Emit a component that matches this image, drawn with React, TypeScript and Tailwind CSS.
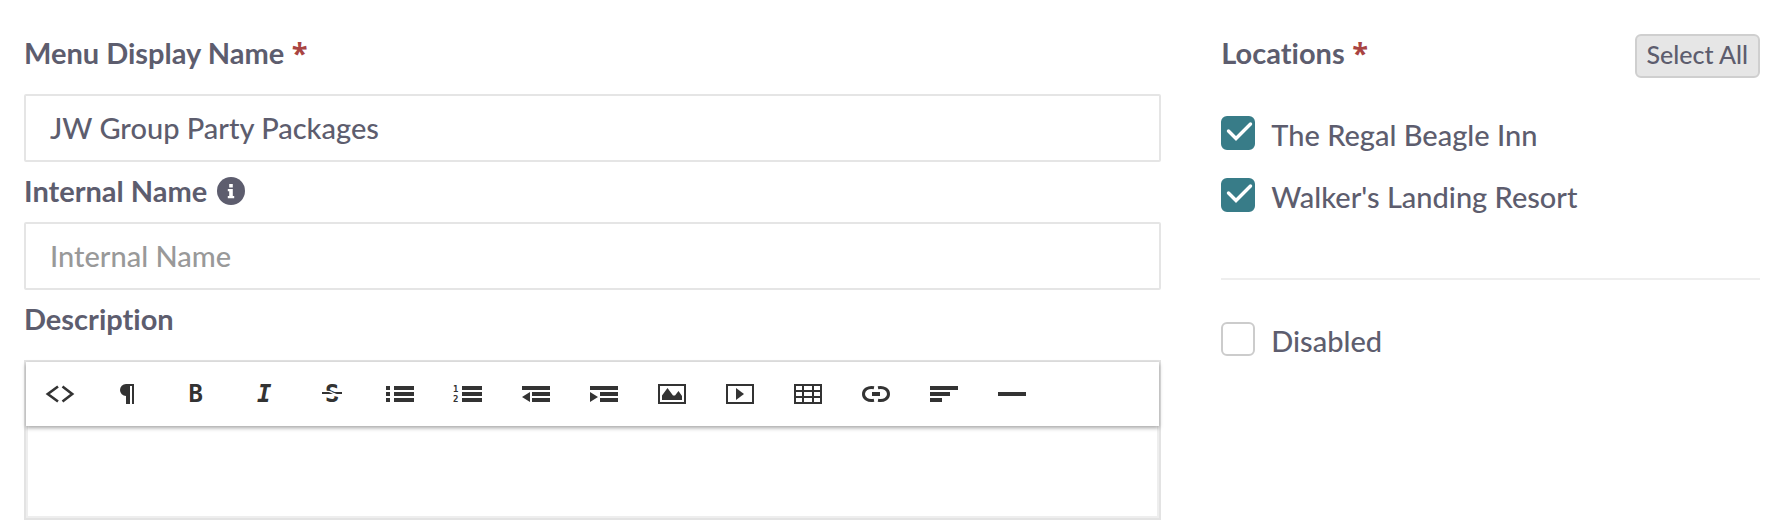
import { useState, type ReactNode } from "react";

const LOCATIONS = ["The Regal Beagle Inn", "Walker's Landing Resort"];

const TOOLS: { name: string; icon: ReactNode }[] = [
  {
    name: "HTML",
    icon: <path d="M12 2.500 1.800 10 12 17.500M16.500 2.500 26.200 10l-9.700 7.500" fill="none" stroke="currentColor" strokeWidth="2.6" />,
  },
  { name: "Formatting", icon: <path d="M12 0h8v20h-2V2h-2v18h-4v-8a6 6 0 0 1 0-12z" /> },
  { name: "Bold", icon: <text x="6.5" y="18" className="font-['DejaVu_Sans_Mono',monospace] text-[24px] font-bold">B</text> },
  {
    name: "Italic",
    icon: <text x="7" y="18" className="font-['DejaVu_Sans_Mono',monospace] text-[24px] font-bold italic">I</text>,
  },
  {
    name: "Strikethrough",
    icon: (
      <>
        <text x="7" y="18" className="font-['DejaVu_Sans_Mono',monospace] text-[24px] font-bold">S</text>
        <path d="M5 6.500 12 7l10 4v2.500l-6-1.500-11-1.500z" fill="#fff" />
        <path d="M4 8h7l4 2H4zM14 8h10v2h-5z" />
      </>
    ),
  },
  {
    name: "Bulleted list",
    icon: <path d="M0 2h4v4H0zM0 8h4v4H0zM0 14h4v4H0zM8 2h20v4H8zM8 8h20v4H8zM8 14h20v4H8z" />,
  },
  {
    name: "Numbered list",
    icon: (
      <>
        <text x="-1" y="8" className="font-['DejaVu_Sans_Mono',monospace] text-[9px] font-bold">1</text>
        <text x="-1" y="18" className="font-['DejaVu_Sans_Mono',monospace] text-[9px] font-bold">2</text>
        <path d="M8 2h20v4H8zM8 8h20v4H8zM8 14h20v4H8z" />
      </>
    ),
  },
  { name: "Outdent", icon: <path d="M0 2h28v4H0zM10 8h18v4H10zM10 14h18v4H10zM8 8v10L0 13z" /> },
  { name: "Indent", icon: <path d="M0 2h28v4H0zM10 8h18v4H10zM10 14h18v4H10zM0 8v10l8-5z" /> },
  {
    name: "Image",
    icon: (
      <>
        <path d="M1 1h26v18H1z" fill="none" stroke="currentColor" strokeWidth="2" />
        <path d="M4 16v-4.500L9.500 4 15 11.500h2L20.500 7l3.500 5v4z" />
      </>
    ),
  },
  {
    name: "Video",
    icon: (
      <>
        <path d="M1 1h26v18H1z" fill="none" stroke="currentColor" strokeWidth="2" />
        <path d="M10 4v12l8-6z" />
      </>
    ),
  },
  {
    name: "Table",
    icon: <path d="M1 1h26v18H1zM0 7h28M0 13h28M9 0v20M19 0v20" fill="none" stroke="currentColor" strokeWidth="2" />,
  },
  {
    name: "Link",
    icon: (
      <>
        <path
          d="M12 3.700C6 2.500 1.500 5.500 1.500 10S6 17.500 12 16.300M16 3.700c6-1.200 10.500 1.800 10.500 6.300S22 17.500 16 16.300"
          fill="none"
          stroke="currentColor"
          strokeWidth="3"
        />
        <path d="M10 8h8v4h-8z" />
      </>
    ),
  },
  { name: "Alignment", icon: <path d="M0 2h28v4H0zM0 8h20v4H0zM0 14h12v4H0z" /> },
  { name: "Horizontal rule", icon: <path d="M0 8h28v4H0z" /> },
];

function Required() {
  return <span className="font-['Open_Sans',sans-serif] text-[#a94442]"> *</span>;
}

function CheckRow({ label, checked, onChange }: { label: string; checked: boolean; onChange: () => void }) {
  return (
    <label className="flex h-[34px] items-start gap-4">
      <span className="grid shrink-0">
        <input
          type="checkbox"
          checked={checked}
          onChange={onChange}
          className="col-start-1 row-start-1 size-[34px] appearance-none rounded-md border-2 border-[#cccccc] bg-white checked:border-[#387c88] checked:bg-[#387c88]"
        />
        {checked && (
          <svg viewBox="0 0 34 34" className="pointer-events-none col-start-1 row-start-1 size-[34px]" aria-hidden="true">
            <path d="m7.500 15 7.500 7.500L29.500 8" fill="none" stroke="#fff" strokeWidth="3.4" strokeLinecap="round" />
          </svg>
        )}
      </span>
      <span className="pt-0.5 leading-[34px]">{label}</span>
    </label>
  );
}

export default function App() {
  const [displayName, setDisplayName] = useState("JW Group Party Packages");
  const [internalName, setInternalName] = useState("");
  const [selected, setSelected] = useState<string[]>(LOCATIONS);
  const [disabled, setDisabled] = useState(false);

  function toggle(name: string) {
    setSelected((prev) => (prev.includes(name) ? prev.filter((n) => n !== name) : [...prev, name]));
  }

  return (
    <form className="grid grid-cols-[19fr_9fr] gap-[60px] bg-white px-6 pt-[34px] font-['Lato','Open_Sans',sans-serif] text-[29px] leading-[38px] font-medium text-[#5d5d6e] [font-variant-ligatures:none]">
      <div className="flex flex-col">
        <label htmlFor="display-name" className="mb-[22px] font-bold">
          Menu Display Name
          <Required />
        </label>
        <input
          id="display-name"
          type="text"
          value={displayName}
          onChange={(e) => setDisplayName(e.target.value)}
          className="h-[68px] w-full rounded-xs border-2 border-[#e5e5e5] px-6 pb-0.5"
        />

        <div className="mt-2.5 mb-3 flex items-center gap-2.5">
          <label htmlFor="internal-name" className="font-bold">
            Internal Name
          </label>
          <svg viewBox="0 0 28 28" className="size-7" role="img" aria-label="Info">
            <circle cx="14" cy="14" r="14" fill="currentColor" />
            <path d="M12.200 7h3.600v3.400h-3.600zM10.800 12h5v7h1.400v2.200h-6.400V19h1.400v-4.800h-1.400z" fill="#fff" />
          </svg>
        </div>
        <input
          id="internal-name"
          type="text"
          placeholder="Internal Name"
          value={internalName}
          onChange={(e) => setInternalName(e.target.value)}
          className="h-[68px] w-full rounded-xs border-2 border-[#e5e5e5] px-6 pb-0.5 placeholder:text-[#999999]"
        />

        <label htmlFor="description" className="mt-2.5 mb-[22px] font-bold">
          Description
        </label>
        <div className="flex flex-col border-2 border-[#e3e3e3]">
          <div className="z-10 flex h-16 bg-white shadow-[0_2px_4px_rgba(0,0,0,0.35)]">
            {TOOLS.map((tool) => (
              <button
                key={tool.name}
                type="button"
                title={tool.name}
                aria-label={tool.name}
                className="flex w-[68px] items-center justify-center text-[#333333]"
              >
                <svg viewBox="0 0 28 20" className="h-5 w-7 overflow-visible" fill="currentColor">
                  {tool.icon}
                </svg>
              </button>
            ))}
          </div>
          <textarea
            id="description"
            className="h-[92px] w-full resize-none border-2 border-t-0 border-[#eeeeee] px-6 py-4 outline-none"
          />
        </div>
      </div>

      <div>
        <div className="flex items-start justify-between">
          <h2 className="font-bold">
            Locations
            <Required />
          </h2>
          <button
            type="button"
            onClick={() => setSelected(LOCATIONS)}
            className="h-11 rounded-md border-2 border-[#cfcfcf] bg-[#e6e6e6] px-2.5 pb-1 text-[25px] leading-9"
          >
            Select All
          </button>
        </div>
        <div className="mt-[38px] flex flex-col gap-7">
          {LOCATIONS.map((name) => (
            <CheckRow key={name} label={name} checked={selected.includes(name)} onChange={() => toggle(name)} />
          ))}
        </div>
        <hr className="mt-[66px] mb-[42px] border-t-2 border-[#eeeeee]" />
        <CheckRow label="Disabled" checked={disabled} onChange={() => setDisabled(!disabled)} />
      </div>
    </form>
  );
}
